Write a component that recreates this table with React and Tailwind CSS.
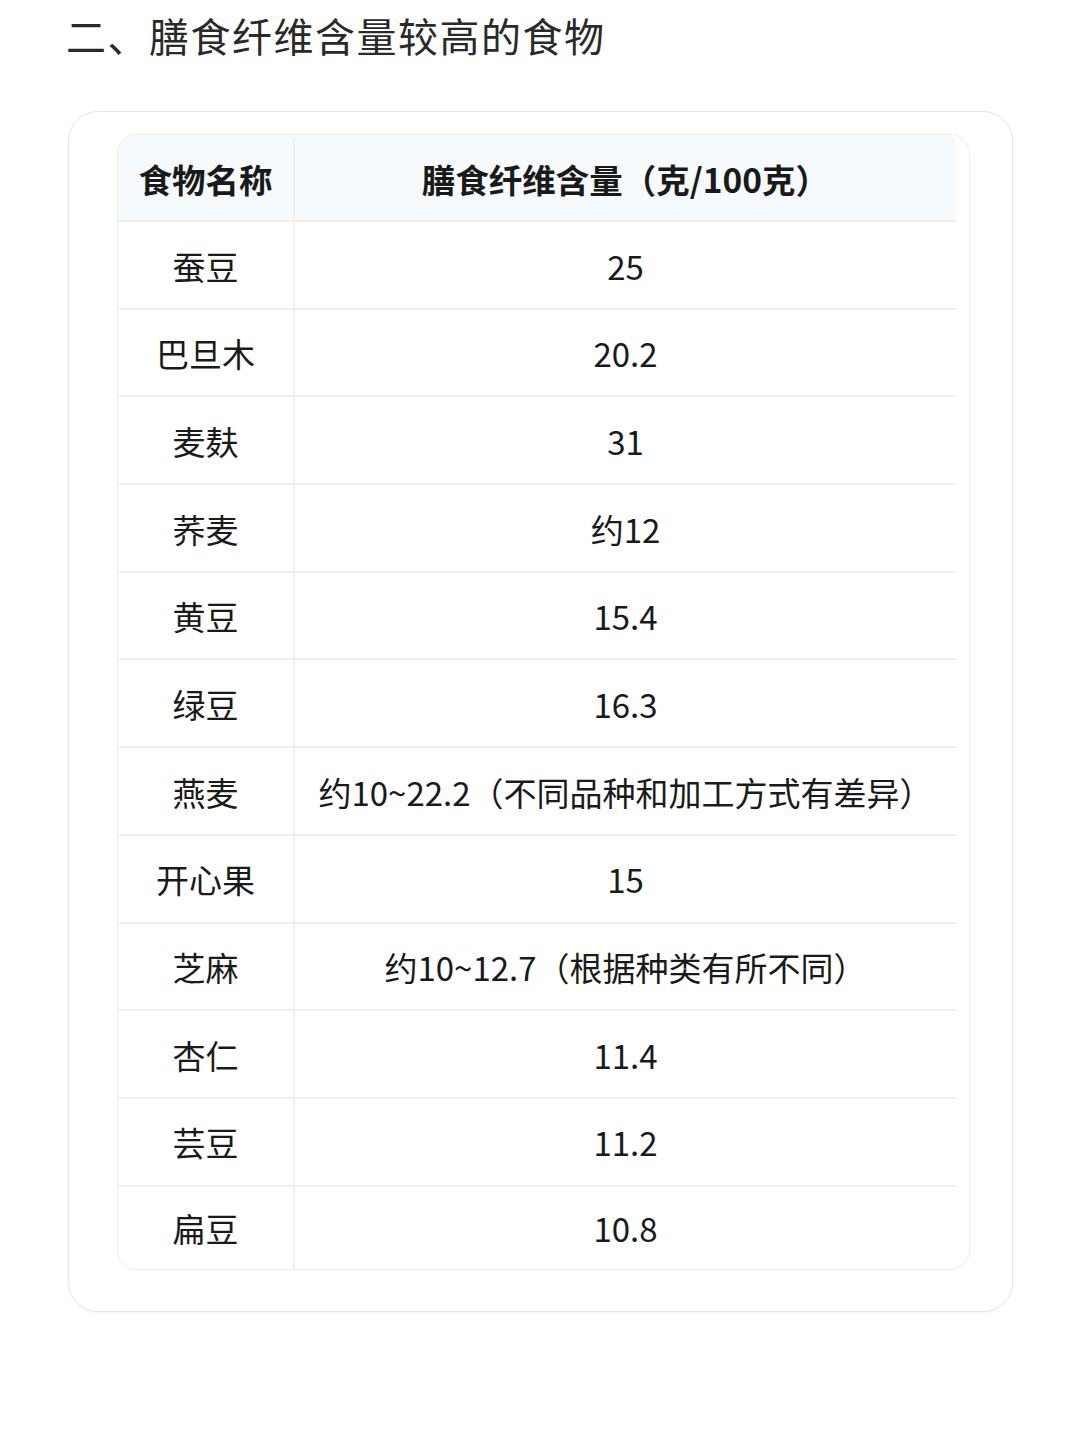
import React from "react";

const rows = [
  ["蚕豆", "25"],
  ["巴旦木", "20.2"],
  ["麦麸", "31"],
  ["荞麦", "约12"],
  ["黄豆", "15.4"],
  ["绿豆", "16.3"],
  ["燕麦", "约10~22.2（不同品种和加工方式有差异）"],
  ["开心果", "15"],
  ["芝麻", "约10~12.7（根据种类有所不同）"],
  ["杏仁", "11.4"],
  ["芸豆", "11.2"],
  ["扁豆", "10.8"],
];

export default function App() {
  return (
    <div
      className="w-[1080px] h-[1440px] bg-white text-[#1a1a1a]"
      style={{ fontFamily: '"Noto Sans CJK SC", "Noto Sans", sans-serif' }}
    >
      <div className="pt-[9px] pl-[66px] text-[40px] leading-[52px] text-[#2a2a2a] tracking-[1.5px]">
        二、膳食纤维含量较高的食物
      </div>
      <div className="mt-[50px] ml-[68px] w-[945px] h-[1201px] rounded-[30px] border border-[#e6e6e6] shadow-[0_1px_3px_rgba(0,0,0,0.05)] pt-[22px] pl-[48px]">
        <div className="w-[853px] rounded-[20px] border border-[#ededed] overflow-hidden">
          <div className="w-[838px]">
            <div className="flex h-[87px] pt-[3px] bg-[#f7fafc] border-b-2 border-[#f0f0f0]">
              <div className="w-[177px] flex items-center justify-center border-r-2 border-[#f0f0f0] text-[33.5px] font-bold">
                食物名称
              </div>
              <div className="flex-1 flex items-center justify-center text-[33.5px] font-bold">
                膳食纤维含量（克/100克）
              </div>
            </div>
            {rows.map(([name, val], i) => (
              <div
                key={i}
                className={
                  i === rows.length - 1
                    ? "flex h-[82px]"
                    : "flex h-[87.7px] border-b-2 border-[#f0f0f0]"
                }
              >
                <div className="w-[177px] pt-[3px] flex items-center justify-center border-r-2 border-[#f0f0f0] text-[33px]">
                  {name}
                </div>
                <div className="flex-1 pt-[3px] flex items-center justify-center text-[33px]">
                  {val}
                </div>
              </div>
            ))}
          </div>
        </div>
      </div>
    </div>
  );
}
